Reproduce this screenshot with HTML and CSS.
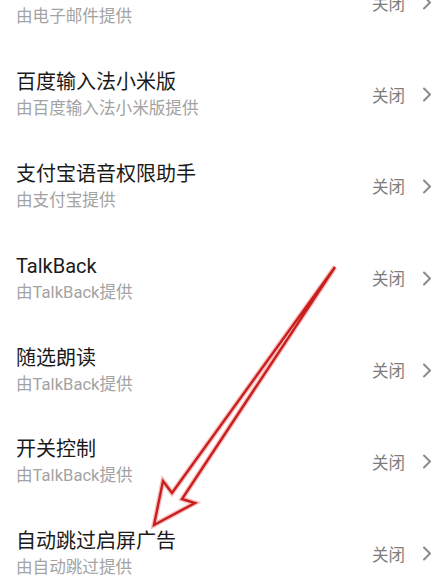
FILE: index.html
```html
<!DOCTYPE html>
<html lang="zh-CN">
<head>
<meta charset="utf-8">
<link rel="stylesheet" href="styles.css">
</head>
<body>
<div class="page">
  <ul class="list">
    <li class="row">
      <div class="info"><div class="title">电子邮件通知服务</div><div class="sub">由电子邮件提供</div></div>
      <span class="status">关闭</span>
      <svg class="chev" viewBox="0 0 10 15" width="10" height="15"><path d="M2 1.5 L8 7.5 L2 13.5"/></svg>
    </li>
    <li class="row">
      <div class="info"><div class="title">百度输入法小米版</div><div class="sub">由百度输入法小米版提供</div></div>
      <span class="status">关闭</span>
      <svg class="chev" viewBox="0 0 10 15" width="10" height="15"><path d="M2 1.5 L8 7.5 L2 13.5"/></svg>
    </li>
    <li class="row">
      <div class="info"><div class="title">支付宝语音权限助手</div><div class="sub">由支付宝提供</div></div>
      <span class="status">关闭</span>
      <svg class="chev" viewBox="0 0 10 15" width="10" height="15"><path d="M2 1.5 L8 7.5 L2 13.5"/></svg>
    </li>
    <li class="row">
      <div class="info"><div class="title">TalkBack</div><div class="sub">由TalkBack提供</div></div>
      <span class="status">关闭</span>
      <svg class="chev" viewBox="0 0 10 15" width="10" height="15"><path d="M2 1.5 L8 7.5 L2 13.5"/></svg>
    </li>
    <li class="row">
      <div class="info"><div class="title">随选朗读</div><div class="sub">由TalkBack提供</div></div>
      <span class="status">关闭</span>
      <svg class="chev" viewBox="0 0 10 15" width="10" height="15"><path d="M2 1.5 L8 7.5 L2 13.5"/></svg>
    </li>
    <li class="row">
      <div class="info"><div class="title">开关控制</div><div class="sub">由TalkBack提供</div></div>
      <span class="status">关闭</span>
      <svg class="chev" viewBox="0 0 10 15" width="10" height="15"><path d="M2 1.5 L8 7.5 L2 13.5"/></svg>
    </li>
    <li class="row">
      <div class="info"><div class="title">自动跳过启屏广告</div><div class="sub">由自动跳过提供</div></div>
      <span class="status">关闭</span>
      <svg class="chev" viewBox="0 0 10 15" width="10" height="15"><path d="M2 1.5 L8 7.5 L2 13.5"/></svg>
    </li>
  </ul>
  <svg class="arrow" viewBox="0 0 448 584" width="448" height="584">
    <polygon class="glow" points="335,267 172,493 163,481 154,525 195,503 182,499"/>
    <polygon class="line" points="335,267 172,493 163,481 154,525 195,503 182,499"/>
  </svg>
</div>
</body>
</html>
```

FILE: styles.css
```css
html, body {
  margin: 0;
  padding: 0;
  background: #ffffff;
}
body {
  font-family: Roboto, "Noto Sans CJK SC", sans-serif;
  width: 448px;
  height: 584px;
  overflow: hidden;
}
.page {
  position: relative;
  width: 448px;
  height: 584px;
  overflow: hidden;
}
.list {
  list-style: none;
  margin: -43px 0 0 0;
  padding: 0;
}
.row {
  display: flex;
  align-items: center;
  height: 91.8px;
  padding: 0 16px;
  box-sizing: border-box;
}
.info {
  flex: 1;
  display: flex;
  flex-direction: column;
  gap: 3px;
}
.title {
  font-size: 20px;
  line-height: 26px;
  color: #1a1a1a;
}
.sub {
  font-size: 16.6px;
  line-height: 22px;
  color: #a3a3a3;
}
.status {
  font-size: 16.5px;
  color: #7d7d7d;
  margin-right: 17px;
}
.chev {
  display: block;
  fill: none;
  stroke: #8a8a8a;
  stroke-width: 2;
  stroke-linecap: round;
  stroke-linejoin: round;
}
.arrow {
  position: absolute;
  left: 0;
  top: 0;
  pointer-events: none;
}
.arrow polygon {
  fill: none;
  stroke-linejoin: miter;
}
.arrow .glow {
  stroke: rgba(235, 70, 70, 0.35);
  stroke-width: 5;
}
.arrow .line {
  stroke: #c81e1e;
  stroke-width: 2.4;
}
```
